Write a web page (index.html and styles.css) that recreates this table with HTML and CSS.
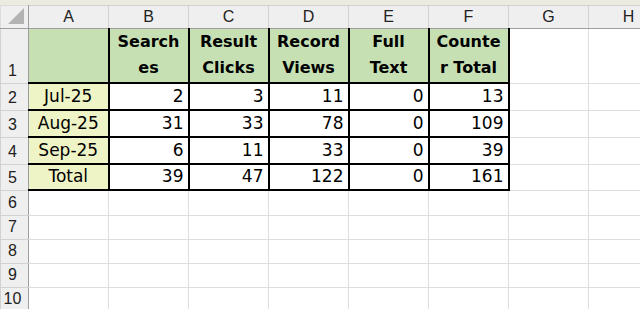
FILE: index.html
```html
<!DOCTYPE html>
<html>
<head>
<meta charset="utf-8">
<link rel="stylesheet" href="styles.css">
</head>
<body>
<div class="strip"></div>
<table class="sheet">
  <colgroup>
    <col class="w-rh"><col class="w-c"><col class="w-c"><col class="w-c"><col class="w-c"><col class="w-c"><col class="w-c"><col class="w-c"><col class="w-c">
  </colgroup>
  <tr class="r-hdr">
    <td class="corner"><svg class="tri" width="16" height="16" viewBox="0 0 16 16"><polygon points="16,0 16,16 0,16" fill="#b3b3b3"/></svg></td>
    <td class="hdr">A</td><td class="hdr">B</td><td class="hdr">C</td><td class="hdr">D</td><td class="hdr">E</td><td class="hdr">F</td><td class="hdr">G</td><td class="hdr">H</td>
  </tr>
  <tr class="r-1">
    <td class="rh">1</td>
    <td class="lab green"></td>
    <td class="box green head">Search<br>es</td>
    <td class="box green head">Result<br>Clicks</td>
    <td class="box green head">Record<br>Views</td>
    <td class="box green head">Full<br>Text</td>
    <td class="box green head">Counte<br>r Total</td>
    <td class="c"></td><td class="c"></td>
  </tr>
  <tr class="r-d">
    <td class="rh">2</td>
    <td class="lab yellow">Jul-25</td>
    <td class="box num">2</td><td class="box num">3</td><td class="box num">11</td><td class="box num">0</td><td class="box num">13</td>
    <td class="c"></td><td class="c"></td>
  </tr>
  <tr class="r-d">
    <td class="rh">3</td>
    <td class="lab yellow">Aug-25</td>
    <td class="box num">31</td><td class="box num">33</td><td class="box num">78</td><td class="box num">0</td><td class="box num">109</td>
    <td class="c"></td><td class="c"></td>
  </tr>
  <tr class="r-d">
    <td class="rh">4</td>
    <td class="lab yellow">Sep-25</td>
    <td class="box num">6</td><td class="box num">11</td><td class="box num">33</td><td class="box num">0</td><td class="box num">39</td>
    <td class="c"></td><td class="c"></td>
  </tr>
  <tr class="r-d5">
    <td class="rh">5</td>
    <td class="lab yellow">Total</td>
    <td class="box num">39</td><td class="box num">47</td><td class="box num">122</td><td class="box num">0</td><td class="box num">161</td>
    <td class="c"></td><td class="c"></td>
  </tr>
  <tr class="r-e6"><td class="rh">6</td><td class="c"></td><td class="c"></td><td class="c"></td><td class="c"></td><td class="c"></td><td class="c"></td><td class="c"></td><td class="c"></td></tr>
  <tr class="r-e"><td class="rh">7</td><td class="c"></td><td class="c"></td><td class="c"></td><td class="c"></td><td class="c"></td><td class="c"></td><td class="c"></td><td class="c"></td></tr>
  <tr class="r-e"><td class="rh">8</td><td class="c"></td><td class="c"></td><td class="c"></td><td class="c"></td><td class="c"></td><td class="c"></td><td class="c"></td><td class="c"></td></tr>
  <tr class="r-e"><td class="rh">9</td><td class="c"></td><td class="c"></td><td class="c"></td><td class="c"></td><td class="c"></td><td class="c"></td><td class="c"></td><td class="c"></td></tr>
  <tr class="r-e"><td class="rh">10</td><td class="c"></td><td class="c"></td><td class="c"></td><td class="c"></td><td class="c"></td><td class="c"></td><td class="c"></td><td class="c"></td></tr>
</table>
</body>
</html>
```
FILE: styles.css
```css
html, body {
  margin: 0;
  padding: 0;
  background: #ffffff;
  overflow: hidden;
}
body {
  width: 640px;
  height: 309px;
  font-family: "DejaVu Sans", sans-serif;
  color: #000;
}
.strip {
  height: 5px;
  background: #ebebe0;
}
.sheet {
  border-collapse: collapse;
  table-layout: fixed;
  width: 668px;
}
.w-rh { width: 28px; }
.w-c { width: 80px; }
.sheet td {
  padding: 0 3px;
  overflow: hidden;
  white-space: nowrap;
  border: 1px solid #dcdcdc;
}
.r-hdr { height: 23px; }
.r-1 { height: 52px; }
.r-d { height: 27px; }
.r-d5 { height: 26px; }
.r-e6 { height: 25px; }
.r-e { height: 24px; }

.corner {
  background: #efefef;
  position: relative;
  padding: 0 !important;
  border-right: 1px solid #9e9e9e !important;
  border-bottom: 1px solid #9e9e9e !important;
}
.tri {
  position: absolute;
  right: 4px;
  bottom: 4px;
}
.sheet td.hdr {
  background: #efefef;
  text-align: center;
  font-family: "Liberation Sans", sans-serif;
  font-size: 16px;
  color: #222;
  border-color: #d2d2d2;
  border-bottom: 1px solid #9e9e9e;
  vertical-align: middle;
}
.sheet td.rh {
  background: #efefef;
  text-align: center;
  font-family: "Liberation Sans", sans-serif;
  font-size: 16px;
  color: #222;
  padding: 0 4px 3px 0;
  border-color: #d2d2d2;
  border-right: 1px solid #9e9e9e;
  vertical-align: bottom;
}
.sheet td.c {
  border-color: #dedede;
}
.green { background: #c6e0b4; }
.yellow { background: #eff4c6; }
.sheet td.lab {
  text-align: center;
  font-size: 17px;
  vertical-align: bottom;
  padding-bottom: 3px;
  border-bottom: 2px solid #000;
}
.sheet td.box {
  border-left: 2px solid #000;
  border-right: 2px solid #000;
  border-bottom: 2px solid #000;
  vertical-align: bottom;
}
.sheet td.head {
  text-align: center;
  font-weight: bold;
  font-size: 16px;
  line-height: 26px;
  padding-bottom: 1px;
}
.sheet td.num {
  text-align: right;
  font-size: 17px;
  padding-bottom: 3px;
  padding-right: 4px;
}
```
